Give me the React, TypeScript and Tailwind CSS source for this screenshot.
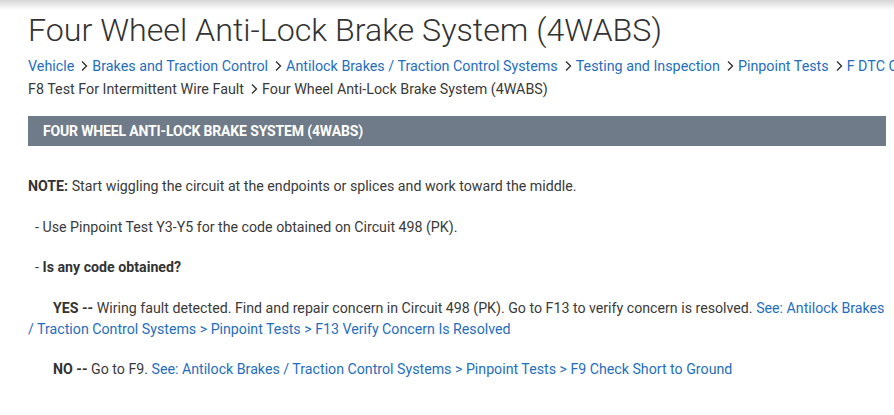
import React from "react";

const Chevron = () => (
  <svg width="7" height="12" viewBox="0 0 7 12" className="inline-block ml-[7px] mr-[4px] align-[-1px]">
    <path d="M1 1.5 L5.5 6 L1 10.5" fill="none" stroke="#333" strokeWidth="1.4" />
  </svg>
);

const Link = ({ children }: { children: React.ReactNode }) => (
  <span className="text-[#1f6ec0]">{children}</span>
);

export default function App() {
  return (
    <div className="w-[894px] h-[415px] overflow-hidden bg-white text-[#3a3a3a] font-['Roboto',sans-serif]">
      <div className="h-[10px] bg-gradient-to-b from-[#d6d6d6] to-white" />
      <div className="pl-[28px] pr-[8px]">
        <h1 className="text-[32.2px] font-light leading-[40px] text-[#333]">
          Four Wheel Anti-Lock Brake System (4WABS)
        </h1>
        <div className="mt-[5px] text-[14.3px] leading-[23px]">
          <div className="whitespace-nowrap">
            <Link>Vehicle</Link>
            <Chevron />
            <Link>Brakes and Traction Control</Link>
            <Chevron />
            <Link>Antilock Brakes / Traction Control Systems</Link>
            <Chevron />
            <Link>Testing and Inspection</Link>
            <Chevron />
            <Link>Pinpoint Tests</Link>
            <Chevron />
            <Link>F DTC Codes</Link>
          </div>
          <div className="whitespace-nowrap">
            F8 Test For Intermittent Wire Fault
            <Chevron />
            Four Wheel Anti-Lock Brake System (4WABS)
          </div>
        </div>
        <div className="mt-[15px] h-[30px] bg-[#6f7b88] flex items-center pl-[15px]">
          <span className="text-white text-[14px] font-bold tracking-[-0.15px]">
            FOUR WHEEL ANTI-LOCK BRAKE SYSTEM (4WABS)
          </span>
        </div>
        <div className="mt-[30px] text-[14.2px] leading-[21px] mr-[-6px]">
          <p>
            <b className="font-bold text-[#333]">NOTE:</b> Start wiggling the circuit at the endpoints or splices and work toward the middle.
          </p>
          <p className="mt-[20px]">{"\u00a0\u00a0"}- Use Pinpoint Test Y3-Y5 for the code obtained on Circuit 498 (PK).</p>
          <p className="mt-[19px]">
            {"\u00a0\u00a0"}- <b className="font-bold text-[#333]">Is any code obtained?</b>
          </p>
          <p className="mt-[20px] indent-[25px]">
            <b className="font-bold text-[#333]">YES --</b> Wiring fault detected. Find and repair concern in Circuit 498 (PK). Go to F13 to verify concern is resolved.{" "}
            <Link>See: Antilock Brakes / Traction Control Systems &gt; Pinpoint Tests &gt; F13 Verify Concern Is Resolved</Link>
          </p>
          <p className="mt-[19px] indent-[25px]">
            <b className="font-bold text-[#333]">NO --</b> Go to F9. <Link>See: Antilock Brakes / Traction Control Systems &gt; Pinpoint Tests &gt; F9 Check Short to Ground</Link>
          </p>
        </div>
      </div>
    </div>
  );
}
